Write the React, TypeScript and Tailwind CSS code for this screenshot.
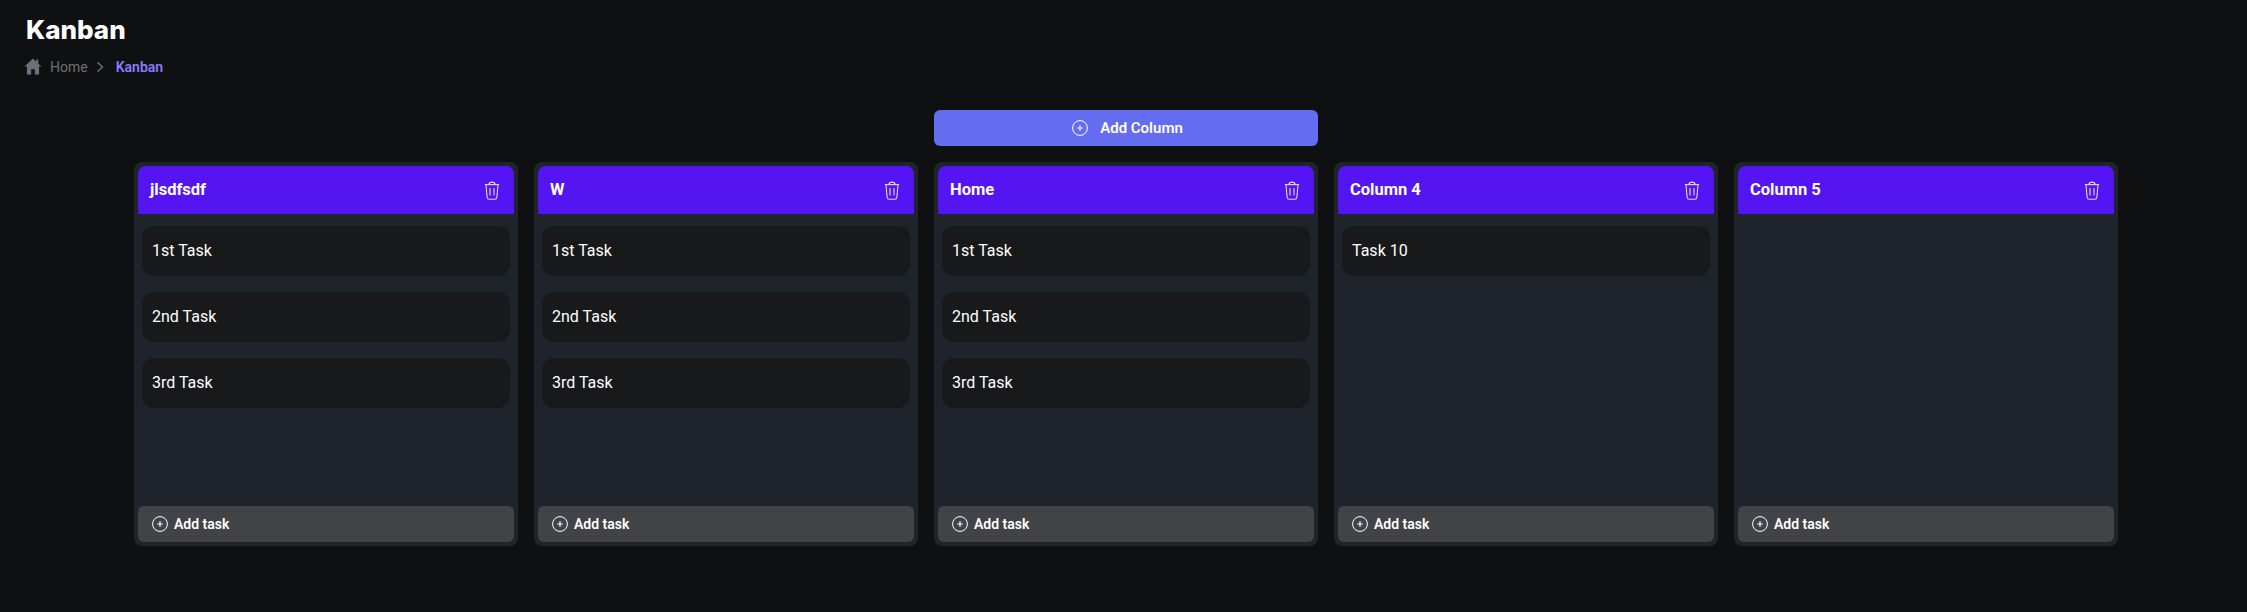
import React from "react";

function PlusCircle({ size = 16 }: { size?: number }) {
  return (
    <svg width={size} height={size} viewBox="0 0 16 16" fill="none" stroke="currentColor" className="shrink-0">
      <circle cx="8" cy="8" r="7.4" strokeWidth="1" />
      <path d="M8 5.2v5.6M5.2 8h5.6" strokeWidth="1.2" />
    </svg>
  );
}

function Trash() {
  return (
    <svg width="16" height="19" viewBox="0 0 16 19" fill="none" stroke="#e3d6ff" strokeWidth="1.1" className="shrink-0">
      <path d="M0.8 3.6h14.4" />
      <path d="M5 3.4c0-3 6-3 6 0" />
      <path d="M2 3.8l1.1 12.4c.1 1.2 1 2 2.2 2h5.4c1.2 0 2.1-.8 2.2-2L14 3.8" />
      <path d="M6 7v7.5M10 7v7.5" />
    </svg>
  );
}

function Column({ title, tasks }: { title: string; tasks: string[] }) {
  return (
    <div className="w-[384px] h-[384px] shrink-0 rounded-lg bg-[#1f232b] p-1 flex flex-col">
      <div className="h-12 shrink-0 rounded-t-lg bg-[#5514f2] flex items-center justify-between pl-3 pr-[14px]">
        <span className="text-[16.5px] font-bold text-white pt-[1px]">{title}</span>
        <Trash />
      </div>
      <div className="flex-1 flex flex-col gap-4 px-1 pt-3">
        {tasks.map((t) => (
          <div key={t} className="h-[50px] rounded-xl bg-[#18191b] flex items-center px-[10px] text-[16px] text-white">
            {t}
          </div>
        ))}
      </div>
      <button className="h-9 shrink-0 rounded-md bg-[#424347] flex items-center gap-[6px] px-[14px] text-[14px] font-semibold text-white">
        <PlusCircle />
        Add task
      </button>
    </div>
  );
}

export default function App() {
  const three = ["1st Task", "2nd Task", "3rd Task"];
  return (
    <div className="w-[2247px] h-[612px] overflow-hidden bg-[#0f1012] font-['Roboto',sans-serif]">
      <div className="pl-[26px] pt-[16px]">
        <h1 className="text-[26px] leading-[28px] font-extrabold text-white font-['Inter',sans-serif]">Kanban</h1>
        <div className="flex items-center mt-[13px] ml-[-2px] h-[20px] text-[14px]">
          <svg width="18" height="17" viewBox="0 0 17 16" fill="#6f7075" className="shrink-0 mt-[-2px]">
            <path d="M8.5 0.5L0.5 8h2.3v7.5h4V10.5h3.4v5h4V8h2.3L13.5 5.3V1.5h-2v1.9z" />
          </svg>
          <span className="ml-[8px] text-[#6f7075]">Home</span>
          <svg width="10" height="12" viewBox="0 0 10 12" fill="none" stroke="#6f7075" strokeWidth="1.5" className="ml-[7px]">
            <path d="M2.5 1.5L7.5 6l-5 4.5" />
          </svg>
          <span className="ml-[11px] text-[14px] font-semibold text-[#8a7dff]">Kanban</span>
        </div>
      </div>
      <div className="ml-[934px] mt-[33px] w-[384px] h-9 rounded-md bg-[#646cf0] flex items-center justify-center gap-[12px] pl-[3px] text-[15px] font-semibold text-white">
        <PlusCircle />
        Add Column
      </div>
      <div className="ml-[134px] mt-4 flex gap-4">
        <Column title="jlsdfsdf" tasks={three} />
        <Column title="W" tasks={three} />
        <Column title="Home" tasks={three} />
        <Column title="Column 4" tasks={["Task 10"]} />
        <Column title="Column 5" tasks={[]} />
      </div>
    </div>
  );
}
